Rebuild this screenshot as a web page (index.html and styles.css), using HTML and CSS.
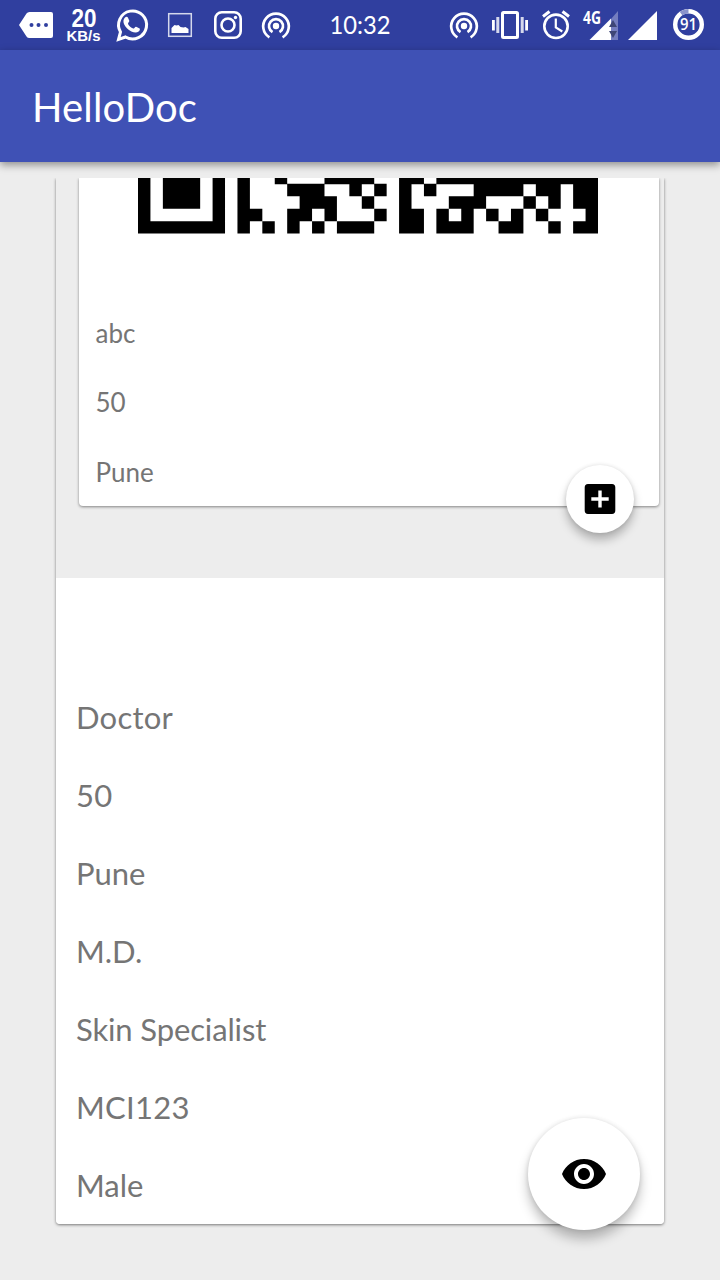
FILE: index.html
```html
<!DOCTYPE html>
<html lang="en">
<head>
<meta charset="utf-8">
<title>HelloDoc</title>
<link rel="stylesheet" href="styles.css">
</head>
<body>
<div class="screen">
  <header class="status-bar">
    <svg class="status-icons" width="720" height="50" viewBox="0 0 720 50">
      <g fill="#fff">
        <path fill-rule="evenodd" d="M19 25 L26.500 13.500Q27.500 12 29.500 12H51a2 2 0 0 1 2 2V36a2 2 0 0 1-2 2H29.500Q27.500 38 26.500 36.500ZM29.500 25a2 2 0 1 0 4 0a2 2 0 1 0-4 0M36.500 25a2 2 0 1 0 4 0a2 2 0 1 0-4 0M44 25a2 2 0 1 0 4 0a2 2 0 1 0-4 0"/>
        <text class="speed" x="84" y="27.300" textLength="25" lengthAdjust="spacingAndGlyphs">20</text>
        <text class="speed-unit" x="83.500" y="41.300" textLength="34" lengthAdjust="spacingAndGlyphs">KB/s</text>
        <path d="M125 17.500c1-1 2.500-1 3 .2l1.300 3.100c.3.800-1.600 2.400-1.300 3.100 1.200 2.200 2.900 3.700 5.200 4.700.9.300 2-2.300 2.900-1.900l3.500 1.700c.8.500-.1 2.400-1 3.200-2.100 1.500-4.700 1-7.200-.2-3.500-1.700-6-4.500-7.400-7.500-.9-2.200-.8-4.600 1-6.400z"/>
        <path d="M171.500 33v-5l3-3 2 .5 2-.5 2 2 3 .5 2-.500 3 2v4z"/>
        <circle cx="235.500" cy="17.500" r="1.700"/>
        <circle cx="276" cy="26" r="3.200"/>
        <circle cx="464" cy="26" r="3.200"/>
      </g>
      <g fill="none" stroke="#fff">
        <path stroke-width="3" d="M118.500 39.500l2-7.500a14 14 0 1 1 5 5z"/>
        <rect x="168.700" y="13.700" width="22.600" height="22.600" stroke-width="1.500" stroke-opacity=".8"/>
        <rect x="215.300" y="12.300" width="25.400" height="25.400" rx="6.500" stroke-width="2.600"/>
        <circle cx="228" cy="25" r="6.500" stroke-width="2.600"/>
        <g stroke-width="2.700">
          <path d="M272.500 32.100a7 7 0 1 1 7 0"/>
          <path d="M269.400 37.300a12.800 12.800 0 1 1 13.200 0"/>
          <path d="M460.500 32.100a7 7 0 1 1 7 0"/>
          <path d="M457.400 37.300a12.800 12.800 0 1 1 13.200 0"/>
        </g>
        <rect x="502.500" y="12.500" width="15" height="25" rx="1" stroke-width="3"/>
        <path stroke-width="2.800" d="M493.400 20v10.500M526.600 20v10.500"/>
        <path stroke-width="3" d="M497.800 17v16M522.200 17v16" stroke-opacity=".8"/>
        <circle cx="556" cy="26.300" r="11.700" stroke-width="2.600"/>
        <path stroke-width="2.200" d="M555.800 18.500v9l6.500 4"/>
        <path stroke-width="3" d="M543 16.500l6.500-5M569 16.500l-6.500-5"/>
        <circle cx="688.500" cy="24.500" r="13.300" stroke-width="4.400"/>
        <path d="M681 13.500a13.300 13.300 0 0 1 7.500-2.300" stroke="#8b93cb" stroke-width="4.400"/>
      </g>
      <path d="M611 19l7-8v29h-7z" fill="#747dbf"/>
      <path d="M589.500 40L611 18.500V40zM628 40l29-29v29z" fill="#fff"/>
      <path d="M613 20l4 7h-8zM609 31h8l-4 7z" fill="#3e4677"/>
      <text class="network" x="583" y="23.500" textLength="18" lengthAdjust="spacingAndGlyphs">4G</text>
      <text class="clock" x="360" y="34" textLength="61" lengthAdjust="spacingAndGlyphs">10:32</text>
      <text class="battery" x="688.500" y="30" textLength="17" lengthAdjust="spacingAndGlyphs">91</text>
    </svg>
  </header>
  <div class="app-bar"><h1 class="app-title">HelloDoc</h1></div>
  <main class="content">
    <section class="profile">
      <div class="code-area">
        <article class="code-card">
          <svg class="qr" viewBox="0 0 37 4.470" preserveAspectRatio="none">
            <path fill="none" stroke="#000" d="M0 0h1m1 0h3m1 0h1m1 0h1m2 0h1m3 0h4m2 0h2m1 0h13
              M0 .970h1m1 0h3m1 0h1m1 0h1m3 0h3m2 0h1m1 0h1m1 0h1m1 0h1m3 0h4m1 0h2m1 0h2
              M0 1.970h1m1 0h3m1 0h1m1 0h1m4 0h3m2 0h1m2 0h1m3 0h3m3 0h1m1 0h1m1 0h2
              M0 2.970h1m5 0h1m1 0h2m2 0h2m1 0h1m3 0h1m1 0h2m1 0h1m1 0h1m1 0h1m1 0h1m1 0h1m3 0h1
              M0 3.970h7m1 0h1m1 0h1m1 0h1m1 0h1m1 0h3m2 0h2m1 0h3m2 0h2m2 0h1m1 0h2"/>
          </svg>
          <ul class="summary"><li>abc</li><li>50</li><li>Pune</li></ul>
          <button class="fab fab-small" aria-label="Add">
            <svg width="32" height="32" viewBox="0 0 32 32"><path fill-rule="evenodd" d="M4 1h24a3.500 3.500 0 0 1 3.300 3.500v23a3.500 3.500 0 0 1-3.300 3.500H4A3.500 3.500 0 0 1 .700 27.500V4.500A3.500 3.500 0 0 1 4 1zM14.300 7.500v6.800h-7v3.400h7V24.500h3.400v-6.800h7v-3.400h-7V7.500z"/></svg>
          </button>
        </article>
      </div>
      <ul class="details">
        <li class="wide">Doctor</li><li class="wide">50</li><li>Pune</li><li>M.D.</li><li class="tight">Skin Specialist</li><li class="wide">MCI123</li><li>Male</li>
      </ul>
      <button class="fab fab-large" aria-label="View">
        <svg width="44" height="30" viewBox="1 4.500 22 15"><path d="M12 4.500C7 4.500 2.730 7.610 1 12c1.730 4.390 6 7.500 11 7.500s9.270-3.110 11-7.500c-1.730-4.390-6-7.500-11-7.500zM12 17c-2.760 0-5-2.240-5-5s2.240-5 5-5 5 2.240 5 5-2.240 5-5 5zm0-8c-1.660 0-3 1.340-3 3s1.340 3 3 3 3-1.340 3-3-1.340-3-3-3z"/></svg>
      </button>
    </section>
  </main>
</div>
</body>
</html>
```

FILE: styles.css
```css
* { box-sizing: border-box; }
body { margin: 0; font-family: Lato, "Liberation Sans", sans-serif; background: #ededed; }
ul { list-style: none; margin: 0; padding: 0; }
.screen { display: flex; flex-direction: column; width: 720px; height: 1280px; overflow: hidden; }
.status-bar { height: 50px; background: #303f9f; flex: none; }
.status-icons { display: block; }
.speed, .speed-unit { font-family: "Liberation Sans", sans-serif; font-weight: bold; text-anchor: middle; }
.speed { font-size: 26.500px; }
.speed-unit { font-size: 15px; }
.network { fill: #fff; font: bold 17px "Open Sans", sans-serif; }
.clock { fill: #fff; font-size: 25.500px; text-anchor: middle; }
.battery { fill: #fff; font: 600 16px "Open Sans", sans-serif; text-anchor: middle; }
.app-bar {
  display: flex; align-items: center; flex: none; height: 112px; padding: 2px 32px 0;
  background: #3f51b5; box-shadow: 0 3px 8px rgba(0, 0, 0, .4);
}
.app-title { margin: 0; color: #fff; font-size: 40px; font-weight: 400; letter-spacing: .150px; }
.content { margin-top: 16px; padding: 0 56px 56px; flex: 1; clip-path: inset(0); }
.profile {
  position: relative; height: 1046px; border-radius: 0 0 4px 4px;
  box-shadow: 0 1px 3px rgba(0, 0, 0, .5);
}
.code-area { height: 400px; padding: 0 5px 0 23px; background: #ededed; }
.code-card {
  position: relative; height: 328px; background: #fff;
  border-radius: 0 0 4px 4px; box-shadow: 0 1px 3px rgba(0, 0, 0, .45);
}
.qr { display: block; width: 460px; height: 55.600px; margin-left: 59.300px; }
.summary { padding: 65px 16.500px 0; color: #757575; font-size: 26px; }
.summary li { height: 69px; line-height: 69px; }
.summary li:last-child { line-height: 71px; }
.details {
  height: 646px; padding: 100px 20px 0; background: #fff;
  border-radius: 0 0 4px 4px; color: #757575; font-size: 31px;
}
.details li { height: 78px; line-height: 78px; }
.details .wide { letter-spacing: .250px; }
.details .tight { letter-spacing: -.130px; }
.fab {
  position: absolute; display: flex; align-items: center; justify-content: center;
  padding: 0; border: 0; border-radius: 50%; background: #fff;
}
.fab svg { display: block; }
.fab-small { right: 25px; bottom: -27px; width: 68px; height: 68px; box-shadow: 0 7px 10px rgba(0, 0, 0, .25), 0 0 4px rgba(0, 0, 0, .12); }
.fab-large { right: 24px; bottom: -6px; width: 112px; height: 112px; box-shadow: 0 9px 12px rgba(0, 0, 0, .25), 0 0 5px rgba(0, 0, 0, .12); }
```
